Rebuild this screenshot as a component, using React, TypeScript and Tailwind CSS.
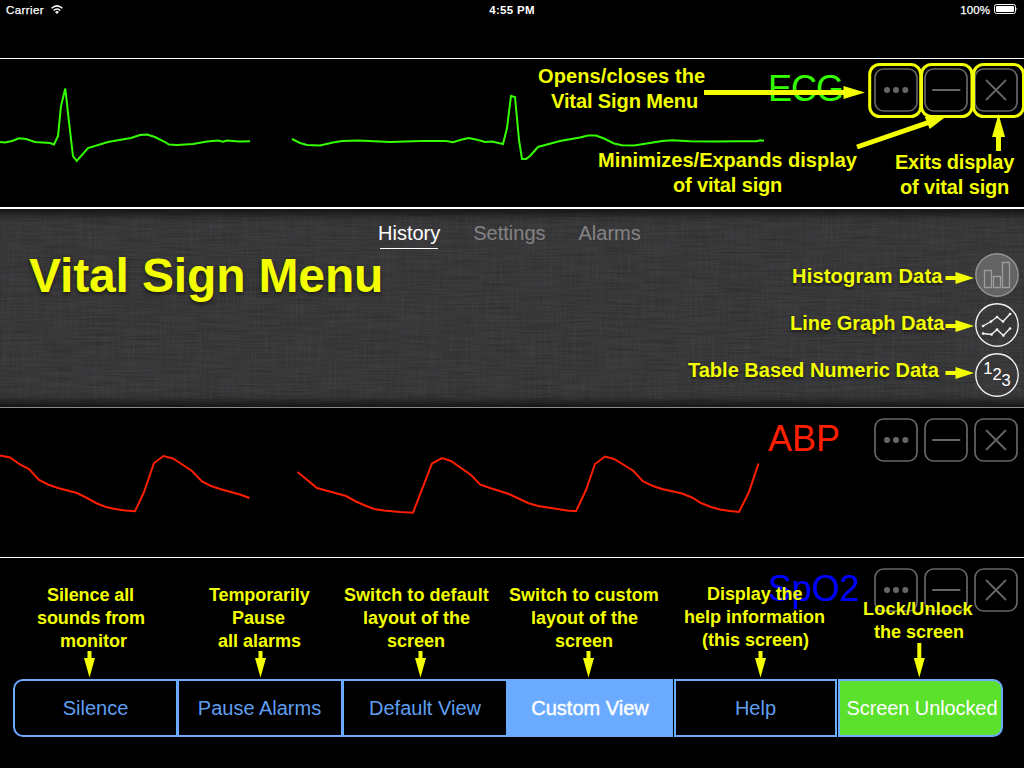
import type { ReactNode } from "react";

const ecgTraces = [
  "0,142 5,142.5 12,141 19,138.3 26,139 35,142 50,143 54,144.5 58,136 61,106 65.3,88.5 69,122 73,156 76.7,161 88,148 108,142 131,138 140,135 147,134.5 155,137 165,142 169,144.5 177,145 193,144 207,141.5 218,140.5 223,141.7 227,140.5 239,141.5 250,141.3",
  "292,139 300,143 307,145 320,145.5 333,142.5 342,141 358,140.5 380,141.5 390,142 405,141.5 421,141 446,141 453,142.3 462,139.5 469,138 478,140 485,142 492,141.5 503,144 507,128 511,96 515,97 519,140 522,159 526,159 530,156 538,147 560,141 580,137.5 588,135.5 596,135.5 604,138.5 614,143.5 622,145.3 634,145.5 650,143 662,141 672,140.3 690,141.3 714,141.5 740,141.2 757,141.3 760,140.3 764,140.7",
];

const abpTraces = [
  "0,455.5 10,457.5 20,464.5 29,469 39,480 48,484.5 58,488 77,493 87,498 97,503.5 106,507 115,509 125,510.5 135,511.3 144,492 154,463 163.5,456 173,458.5 183,465 192,471 202,481.5 211,486 220,489 240,494.5 249.5,498",
  "297.5,472 317,488 346,496 356,501.5 365,505.5 374,509 384,510.5 400,512 413,512.7 432,463.5 442,458 451,461 471,475 480,484.5 490,488 509,494 528,503 538,506 567,510.5 576,511.3 586,490 595,464 605,456.5 614,459 624,465 633.5,471 643,481.5 653,486 662,489 682,493.5 692,497.5 701,503 711,507 720,509.5 730,511 739,512 749,492 758.5,463.5",
];

function Wave({ traces, top, color }: { traces: string[]; top: number; color: string }) {
  return (
    <svg className={`h-[148px] w-[768px] shrink-0 ${color}`} viewBox={`0 ${top} 768 148`} fill="none" stroke="currentColor" strokeWidth="2">
      {traces.map((points) => (
        <polyline key={points} points={points} />
      ))}
    </svg>
  );
}

function BoxButton({ label, children }: { label: string; children: ReactNode }) {
  return (
    <button aria-label={label} className="size-11 text-[#666666]">
      <svg viewBox="0 0 44 44" className="size-11" fill="none" stroke="currentColor" strokeWidth="1.7">
        <rect x="1" y="1" width="42" height="42" rx="8.5" />
        {children}
      </svg>
    </button>
  );
}

function SignControls() {
  return (
    <div className="ml-auto flex gap-1.5 pr-1.5">
      <BoxButton label="Menu">
        <g fill="currentColor" stroke="none">
          <circle cx="13" cy="22" r="3" />
          <circle cx="22" cy="22" r="3" />
          <circle cx="31.300" cy="22" r="3" />
        </g>
      </BoxButton>
      <BoxButton label="Minimize">
        <path d="M8.300 22h28" strokeWidth="2" />
      </BoxButton>
      <BoxButton label="Close">
        <path d="M12 12l20 20M32 12L12 32" strokeWidth="1.800" />
      </BoxButton>
    </div>
  );
}

function StatusBar() {
  return (
    <header className="grid h-[58px] grid-cols-3 items-start px-[6px] pt-[3px] text-[11.5px] leading-[14px] text-white">
      <div className="flex items-start gap-[7px]">
        <span className="tracking-[0.4px] [-webkit-text-stroke:0.25px_white]">Carrier</span>
        <svg viewBox="0 0 12 9" className="mt-[2px] h-[9px] w-3" fill="none" stroke="white" strokeWidth="1.5">
          <path d="M0.600 3.300Q6 -1.500 11.400 3.300" />
          <path d="M2.600 5.500Q6 2.400 9.400 5.500" />
          <path d="M4 7Q6 5.200 8 7L6 9Z" fill="white" stroke="none" />
        </svg>
      </div>
      <div className="text-center font-bold tracking-[0.3px]">4:55 PM</div>
      <div className="flex items-start justify-end gap-[4px]">
        <span className="tracking-[0.1px] [-webkit-text-stroke:0.25px_white]">100%</span>
        <svg viewBox="0 0 24 10" className="mt-px h-[10px] w-6">
          <rect x="0.5" y="0.5" width="21" height="9" rx="2" fill="none" stroke="white" />
          <rect x="2" y="2" width="18" height="6" rx="0.8" fill="white" />
          <path d="M22.600 3.200Q24 5 22.600 6.800Z" fill="white" />
        </svg>
      </div>
    </header>
  );
}

function Linen() {
  return (
    <svg className="absolute inset-0 size-full" aria-hidden="true">
      <filter id="weft" x="0" y="0" width="100%" height="100%">
        <feTurbulence type="fractalNoise" baseFrequency="0.025 0.6" numOctaves="2" seed="4" />
        <feColorMatrix values="0 0 0 0 0  0 0 0 0 0  0 0 0 0 0  1.5 0 0 0 -0.55" />
      </filter>
      <filter id="warp" x="0" y="0" width="100%" height="100%">
        <feTurbulence type="fractalNoise" baseFrequency="0.6 0.025" numOctaves="2" seed="9" />
        <feColorMatrix values="0 0 0 0 1  0 0 0 0 1  0 0 0 0 1  1.2 0 0 0 -0.5" />
      </filter>
      <rect width="100%" height="100%" filter="url(#weft)" opacity="0.24" />
      <rect width="100%" height="100%" filter="url(#warp)" opacity="0.06" />
    </svg>
  );
}

function SignMenu() {
  return (
    <section className="relative h-[201px] border-t-2 border-b border-t-white border-b-[#8c8c8c] bg-[#3a3a3c]">
      <Linen />
      <div className="absolute inset-0 shadow-[inset_0_14px_10px_-9px_rgba(0,0,0,0.7),inset_0_-14px_10px_-9px_rgba(0,0,0,0.7)]" />
      <nav className="relative flex gap-[33px] pt-3 pl-[378px] text-xl leading-6 text-[#838383]">
        <span className="flex flex-col items-center text-white">
          History
          <span className="mt-[3px] h-px w-[58px] bg-white" />
        </span>
        <span>Settings</span>
        <span>Alarms</span>
      </nav>
      <div className="relative flex flex-col items-end gap-1.5 pt-[4px] pr-[5px]">
        <svg viewBox="0 0 44 44" className="size-11" fill="none" stroke="#969696" strokeWidth="1.4">
          <circle cx="22" cy="22" r="21.2" fill="#646465" />
          <path d="M9.500 17.500h7V34.500h-7zM18.500 23.500h7V34.500h-7zM27.500 9.500h7V34.500h-7z" stroke="#9c9c9c" strokeWidth="1.300" />
        </svg>
        <svg viewBox="0 0 44 44" className="size-11" fill="none" stroke="#f0f0f0" strokeWidth="1.4">
          <circle cx="22" cy="22" r="21.2" />
          <path d="M8 23L16 18.500L22 14L28 18.500L35 11M8 30.500L16.500 31.500L22 26.500L28.300 32.500L35 25.500" />
          <path d="M8 23h.1M16 18.500h.1M22 14h.1M28 18.500h.1M35 11h.1M8 30.500h.1M16.500 31.500h.1M22 26.500h.1M28.300 32.500h.1M35 25.500h.1" strokeWidth="2.6" strokeLinecap="round" />
        </svg>
        <div className="relative flex size-11 justify-center pt-[7px] text-[16.5px] leading-4 text-white">
          <svg viewBox="0 0 44 44" className="absolute inset-0 size-11" fill="none" stroke="#f0f0f0" strokeWidth="1.4">
            <circle cx="22" cy="22" r="21.2" />
          </svg>
          <span>1</span>
          <span className="pt-[6px]">2</span>
          <span className="pt-[12px]">3</span>
        </div>
      </div>
    </section>
  );
}

function BottomBar() {
  const base = "flex items-center justify-center border-2 border-[#6aabff] text-xl text-[#5f9ff0]";
  return (
    <nav className="flex h-[58px] pl-[13px]">
      <button className={`${base} w-[165px] rounded-l-[10px]`}>Silence</button>
      <button className={`${base} -ml-px w-[166px]`}>
        <span className="-ml-px">Pause Alarms</span>
      </button>
      <button className={`${base} -ml-px w-[166px]`}>Default View</button>
      <button className={`${base} -ml-px w-[166px] bg-[#6aabff]`}>
        <span className="text-white [-webkit-text-stroke:0.4px_white]">Custom View</span>
      </button>
      <button className={`${base} ml-px w-[163px]`}>Help</button>
      <button className={`${base} ml-px w-[165px] rounded-r-[10px] bg-[#5be02b]`}>
        <span className="ml-[3px] tracking-[-0.1px] whitespace-nowrap text-white">Screen Unlocked</span>
      </button>
    </nav>
  );
}

function Note({ className, children }: { className: string; children: ReactNode }) {
  return <div className={`absolute font-bold whitespace-nowrap text-[#f3ff00] ${className}`}>{children}</div>;
}

const actionNoteArrows = [89.5, 260.5, 420.5, 588.5, 760.5];
const chartNoteArrows = [278, 326, 373];

function HelpOverlay() {
  return (
    <div className="pointer-events-none absolute inset-0">
      <svg viewBox="0 0 1024 768" className="absolute inset-0 size-full" fill="#f3ff00">
        <g fill="none" stroke="#f3ff00" strokeWidth="3">
          <rect x="869.7" y="64.5" width="51" height="52" rx="10" />
          <rect x="921.5" y="64.5" width="50.5" height="52" rx="10" />
          <rect x="973.5" y="64.5" width="50" height="52" rx="10" />
        </g>
        <path d="M704 90h139.500v-4L865 92.500L843.500 99v-4H704z" />
        <path d="M857 147L928 122.700" stroke="#f3ff00" strokeWidth="5" />
        <path d="M924.700 116.700L944.700 117.500L929.700 129z" />
        <path d="M996 151V137h-4L998.500 114L1005 137h-4v14z" />
        {chartNoteArrows.map((y) => (
          <path key={y} d={`M945.500 ${y - 2}h10v-4L974 ${y}L955.500 ${y + 6}v-4h-10z`} />
        ))}
        {actionNoteArrows.map((x) => (
          <path key={x} d={`M${x - 2} 651v7h-3.500L${x} 677.500L${x + 5.500} 658h-3.500v-7z`} />
        ))}
        <path d="M917.300 643v15h-3.500L919.300 677.500L924.800 658h-3.500v-15z" />
      </svg>
      <Note className="top-[64px] left-[538px] text-xl leading-[25px]">
        <p className="tracking-[0.1px]">Opens/closes the</p>
        <p className="ml-[13px] tracking-[-0.1px]">Vital Sign Menu</p>
      </Note>
      <Note className="top-[148px] left-[598px] text-xl leading-[25px]">
        <p>Minimizes/Expands display</p>
        <p className="ml-[75px] tracking-[-0.15px]">of vital sign</p>
      </Note>
      <Note className="top-[150px] left-[895px] text-xl leading-[25px]">
        <p className="tracking-[-0.25px]">Exits display</p>
        <p className="ml-[5px] tracking-[-0.15px]">of vital sign</p>
      </Note>
      <Note className="top-[248px] left-[29px] text-5xl leading-[56px] tracking-[-0.15px] [text-shadow:0_2px_4px_rgba(0,0,0,0.6)]">Vital Sign Menu</Note>
      <Note className="top-[264px] left-[792px] text-xl leading-[25px] tracking-[0.2px] [text-shadow:0_2px_3px_rgba(0,0,0,0.6)]">Histogram Data</Note>
      <Note className="top-[311px] left-[790px] text-xl leading-[25px] [text-shadow:0_2px_3px_rgba(0,0,0,0.6)]">Line Graph Data</Note>
      <Note className="top-[358px] left-[688px] text-xl leading-[25px] [text-shadow:0_2px_3px_rgba(0,0,0,0.6)]">Table Based Numeric Data</Note>
      <Note className="top-[584px] left-[37px] text-lg leading-[23px]">
        <p className="ml-[10px] tracking-[-0.1px]">Silence all</p>
        <p className="tracking-[-0.1px]">sounds from</p>
        <p className="ml-[23px]">monitor</p>
      </Note>
      <Note className="top-[584px] left-[209px] text-lg leading-[23px]">
        <p className="tracking-[-0.1px]">Temporarily</p>
        <p className="ml-[23px]">Pause</p>
        <p className="ml-[9px]">all alarms</p>
      </Note>
      <Note className="top-[584px] left-[344px] text-lg leading-[23px]">
        <p className="tracking-[0.05px]">Switch to default</p>
        <p className="ml-[19px]">layout of the</p>
        <p className="ml-[43px]">screen</p>
      </Note>
      <Note className="top-[584px] left-[509px] text-lg leading-[23px]">
        <p className="tracking-[0.05px]">Switch to custom</p>
        <p className="ml-[22px]">layout of the</p>
        <p className="ml-[46px]">screen</p>
      </Note>
      <Note className="top-[583px] left-[684px] text-lg leading-[23px]">
        <p className="ml-[23px] tracking-[-0.05px]">Display the</p>
        <p>help information</p>
        <p className="ml-[18px]">(this screen)</p>
      </Note>
      <Note className="top-[598px] left-[863px] text-lg leading-[23px]">
        <p className="tracking-[0.25px]">Lock/Unlock</p>
        <p className="ml-[11px]">the screen</p>
      </Note>
    </div>
  );
}

export default function App() {
  return (
    <div className="relative h-[768px] w-[1024px] overflow-hidden bg-black font-['Liberation_Sans',Arial,sans-serif]">
      <StatusBar />
      <section className="flex h-[149px] border-t border-white">
        <Wave traces={ecgTraces} top={59} color="text-[#33ff00]" />
        <h2 className="pt-3 text-4xl leading-9 tracking-[-1px] text-[#33ff00]">ECG</h2>
        <div className="ml-auto pt-[9px]">
          <SignControls />
        </div>
      </section>
      <SignMenu />
      <section className="flex h-[149px]">
        <Wave traces={abpTraces} top={408} color="text-[#ff1e00]" />
        <h2 className="pt-[13px] text-4xl leading-9 text-[#ff1e00]">ABP</h2>
        <div className="ml-auto pt-[10px]">
          <SignControls />
        </div>
      </section>
      <section className="flex h-[122px] border-t border-white pl-[768px]">
        <h2 className="pt-[13px] text-4xl leading-9 tracking-[-0.2px] text-[#0000ff]">SpO2</h2>
        <div className="ml-auto pt-[10px]">
          <SignControls />
        </div>
      </section>
      <BottomBar />
      <HelpOverlay />
    </div>
  );
}
